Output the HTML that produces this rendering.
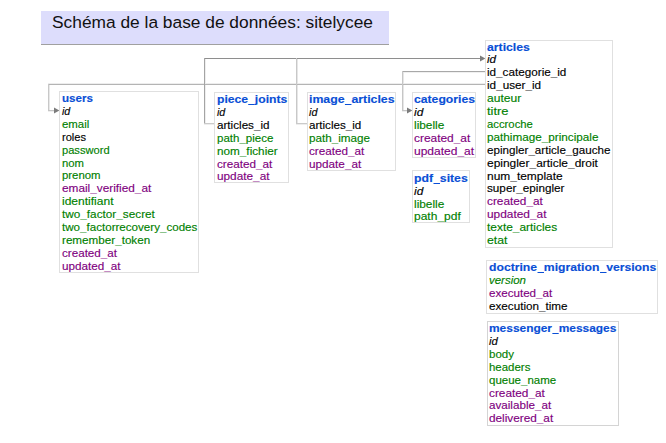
<!DOCTYPE html>
<html><head><meta charset="utf-8"><style>
html,body{margin:0;padding:0;background:#fff;width:666px;height:443px;overflow:hidden;position:relative}
body{font-family:"Liberation Sans",sans-serif}
.title{position:absolute;left:41px;top:11px;width:348px;height:33px;background:#ddddfc;border-bottom:1px solid #a0a0a0}
.title span{position:absolute;left:11px;top:2px;font-size:16.3px;line-height:19px;color:#111;white-space:nowrap;transform-origin:0 0;transform:scaleX(1.065)}
.tb{position:absolute;box-sizing:border-box;border:1px solid #e0e0e0;background:#fff}
.r{position:absolute;white-space:nowrap;font-size:11.8px;line-height:13px;height:13px;transform-origin:0 0;-webkit-text-stroke:0.15px currentColor}
.h{font-weight:bold;color:#0a4fd6;font-size:11.3px}
.i{font-style:italic}
.u{opacity:.6;-webkit-text-stroke:0}
.hu{position:relative;color:transparent;-webkit-text-stroke:0}
.hu::after{content:'';position:absolute;left:0.3px;right:-0.3px;bottom:-0.8px;height:1.5px;background:#0a4fd6}
.ln{position:absolute}
.ar{position:absolute}
</style></head><body>
<div class="title"><span>Schéma de la base de données: sitelycee</span></div>
<div class="ln" style="left:48px;top:83px;width:437px;height:1px;background:#ededed"></div>
<div class="ln" style="left:402px;top:72px;width:83px;height:1px;background:#f0f0f0"></div>
<div class="ln" style="left:205px;top:58px;width:1px;height:66px;background:#eeeeee"></div>
<div class="ln" style="left:204px;top:124px;width:10px;height:1px;background:#ededed"></div>
<div class="ln" style="left:297px;top:58px;width:1px;height:66px;background:#e6e6e6"></div>
<div class="ln" style="left:296px;top:124px;width:11px;height:1px;background:#ededed"></div>
<div class="ln" style="left:49px;top:84px;width:1px;height:27px;background:#e8e8e8"></div>
<div class="ln" style="left:48px;top:111px;width:7px;height:1px;background:#eeeeee"></div>
<div class="ln" style="left:403px;top:71px;width:1px;height:40px;background:#e6e6e6"></div>
<div class="ln" style="left:402px;top:111px;width:6px;height:1px;background:#eeeeee"></div>
<div class="ln" style="left:48px;top:84px;width:437px;height:1px;background:#b4b4b4"></div>
<div class="ln" style="left:402px;top:71px;width:83px;height:1px;background:#a8a8a8"></div>
<div class="ln" style="left:204px;top:58px;width:277px;height:1px;background:#8e8e8e"></div>
<div class="ln" style="left:204px;top:58px;width:1px;height:66px;background:#a4a4a4"></div>
<div class="ln" style="left:204px;top:123px;width:10px;height:1px;background:#cacaca"></div>
<div class="ln" style="left:296px;top:58px;width:1px;height:66px;background:#c8c8c8"></div>
<div class="ln" style="left:296px;top:123px;width:11px;height:1px;background:#cacaca"></div>
<div class="ln" style="left:48px;top:84px;width:1px;height:27px;background:#c8c8c8"></div>
<div class="ln" style="left:48px;top:110px;width:7px;height:1px;background:#c4c4c4"></div>
<div class="ln" style="left:402px;top:71px;width:1px;height:40px;background:#c6c6c6"></div>
<div class="ln" style="left:402px;top:110px;width:6px;height:1px;background:#c4c4c4"></div>
<svg class="ar" style="left:480px;top:55px" width="6" height="7"><polygon points="0,0.6 5.4,3.5 0,6.4" fill="#7c7c7c"/></svg>
<svg class="ar" style="left:54px;top:107px" width="6" height="7"><polygon points="0,0.6 5.4,3.5 0,6.4" fill="#7c7c7c"/></svg>
<svg class="ar" style="left:407px;top:107px" width="6" height="7"><polygon points="0,0.6 5.4,3.5 0,6.4" fill="#7c7c7c"/></svg>
<div class="tb" style="left:59px;top:91px;width:140px;height:182px"></div>
<div class="r h" style="left:62.10px;top:91.70px;transform:scaleX(1.0242)">users</div>
<div class="r i" style="left:62.10px;top:104.90px;transform:scaleX(0.9054);color:#000000">id</div>
<div class="r" style="left:62.10px;top:117.80px;transform:scaleX(0.9680);color:#008000">email</div>
<div class="r" style="left:62.10px;top:130.70px;transform:scaleX(0.9412);color:#000000">roles</div>
<div class="r" style="left:62.10px;top:143.60px;transform:scaleX(0.9425);color:#008000">password</div>
<div class="r" style="left:62.10px;top:156.50px;transform:scaleX(0.9586);color:#008000">nom</div>
<div class="r" style="left:62.10px;top:169.40px;transform:scaleX(0.9650);color:#008000">prenom</div>
<div class="r" style="left:62.10px;top:182.30px;transform:scaleX(1.0010);color:#800080">email<span class="u">_</span>verified<span class="u">_</span>at</div>
<div class="r" style="left:62.10px;top:195.20px;transform:scaleX(1.0197);color:#008000">identifiant</div>
<div class="r" style="left:62.10px;top:208.10px;transform:scaleX(0.9972);color:#008000">two<span class="u">_</span>factor<span class="u">_</span>secret</div>
<div class="r" style="left:62.10px;top:221.00px;transform:scaleX(0.9828);color:#008000">two<span class="u">_</span>factorrecovery<span class="u">_</span>codes</div>
<div class="r" style="left:62.10px;top:233.90px;transform:scaleX(0.9887);color:#008000">remember<span class="u">_</span>token</div>
<div class="r" style="left:62.10px;top:246.80px;transform:scaleX(0.9865);color:#800080">created<span class="u">_</span>at</div>
<div class="r" style="left:62.10px;top:259.70px;transform:scaleX(0.9922);color:#800080">updated<span class="u">_</span>at</div>
<div class="tb" style="left:214px;top:92px;width:75px;height:91px"></div>
<div class="r h" style="left:217.20px;top:92.70px;transform:scaleX(1.0763)">piece<span class="hu">_</span>joints</div>
<div class="r i" style="left:217.20px;top:105.90px;transform:scaleX(0.9054);color:#000000">id</div>
<div class="r" style="left:217.20px;top:118.80px;transform:scaleX(0.9887);color:#000000">articles<span class="u">_</span>id</div>
<div class="r" style="left:217.20px;top:131.70px;transform:scaleX(0.9764);color:#008000">path<span class="u">_</span>piece</div>
<div class="r" style="left:217.20px;top:144.60px;transform:scaleX(0.9950);color:#008000">nom<span class="u">_</span>fichier</div>
<div class="r" style="left:217.20px;top:157.50px;transform:scaleX(0.9918);color:#800080">created<span class="u">_</span>at</div>
<div class="r" style="left:217.20px;top:170.40px;transform:scaleX(0.9998);color:#800080">update<span class="u">_</span>at</div>
<div class="tb" style="left:307px;top:92px;width:89px;height:79px"></div>
<div class="r h" style="left:309.30px;top:92.70px;transform:scaleX(1.0887)">image<span class="hu">_</span>articles</div>
<div class="r i" style="left:309.30px;top:105.90px;transform:scaleX(0.9159);color:#000000">id</div>
<div class="r" style="left:309.30px;top:118.80px;transform:scaleX(0.9831);color:#000000">articles<span class="u">_</span>id</div>
<div class="r" style="left:309.30px;top:131.70px;transform:scaleX(0.9910);color:#008000">path<span class="u">_</span>image</div>
<div class="r" style="left:309.30px;top:144.60px;transform:scaleX(0.9918);color:#800080">created<span class="u">_</span>at</div>
<div class="r" style="left:309.30px;top:157.50px;transform:scaleX(0.9941);color:#800080">update<span class="u">_</span>at</div>
<div class="tb" style="left:412px;top:92px;width:64px;height:66px"></div>
<div class="r h" style="left:413.90px;top:92.70px;transform:scaleX(1.0786)">categories</div>
<div class="r i" style="left:413.90px;top:105.90px;transform:scaleX(1.0106);color:#000000">id</div>
<div class="r" style="left:413.90px;top:118.80px;transform:scaleX(1.0050);color:#008000">libelle</div>
<div class="r" style="left:413.90px;top:131.70px;transform:scaleX(1.0098);color:#800080">created<span class="u">_</span>at</div>
<div class="r" style="left:413.90px;top:144.60px;transform:scaleX(1.0176);color:#800080">updated<span class="u">_</span>at</div>
<div class="tb" style="left:412px;top:170px;width:58px;height:53px"></div>
<div class="r h" style="left:413.90px;top:171.70px;transform:scaleX(1.0825)">pdf<span class="hu">_</span>sites</div>
<div class="r i" style="left:413.90px;top:184.60px;transform:scaleX(1.0106);color:#000000">id</div>
<div class="r" style="left:413.90px;top:197.50px;transform:scaleX(1.0050);color:#008000">libelle</div>
<div class="r" style="left:413.90px;top:210.40px;transform:scaleX(1.0183);color:#008000">path<span class="u">_</span>pdf</div>
<div class="tb" style="left:485px;top:40px;width:128px;height:208px"></div>
<div class="r h" style="left:487.00px;top:40.70px;transform:scaleX(1.0832)">articles</div>
<div class="r i" style="left:487.00px;top:53.40px;transform:scaleX(0.9896);color:#000000">id</div>
<div class="r" style="left:487.00px;top:66.30px;transform:scaleX(0.9917);color:#000000">id<span class="u">_</span>categorie<span class="u">_</span>id</div>
<div class="r" style="left:487.00px;top:79.20px;transform:scaleX(0.9934);color:#000000">id<span class="u">_</span>user<span class="u">_</span>id</div>
<div class="r" style="left:487.00px;top:92.10px;transform:scaleX(1.0223);color:#008000">auteur</div>
<div class="r" style="left:487.00px;top:105.00px;transform:scaleX(1.0943);color:#008000">titre</div>
<div class="r" style="left:487.00px;top:117.90px;transform:scaleX(0.9581);color:#008000">accroche</div>
<div class="r" style="left:487.00px;top:130.80px;transform:scaleX(0.9941);color:#008000">pathimage<span class="u">_</span>principale</div>
<div class="r" style="left:487.00px;top:143.70px;transform:scaleX(0.9855);color:#000000">epingler<span class="u">_</span>article<span class="u">_</span>gauche</div>
<div class="r" style="left:487.00px;top:156.60px;transform:scaleX(1.0122);color:#000000">epingler<span class="u">_</span>article<span class="u">_</span>droit</div>
<div class="r" style="left:487.00px;top:169.50px;transform:scaleX(1.0127);color:#000000">num<span class="u">_</span>template</div>
<div class="r" style="left:487.00px;top:182.40px;transform:scaleX(0.9929);color:#000000">super<span class="u">_</span>epingler</div>
<div class="r" style="left:487.00px;top:195.30px;transform:scaleX(1.0008);color:#800080">created<span class="u">_</span>at</div>
<div class="r" style="left:487.00px;top:208.20px;transform:scaleX(1.0075);color:#800080">updated<span class="u">_</span>at</div>
<div class="r" style="left:487.00px;top:221.10px;transform:scaleX(1.0100);color:#008000">texte<span class="u">_</span>articles</div>
<div class="r" style="left:487.00px;top:234.00px;transform:scaleX(1.0403);color:#008000">etat</div>
<div class="tb" style="left:486px;top:260px;width:172px;height:54px"></div>
<div class="r h" style="left:488.90px;top:260.70px;transform:scaleX(1.0781)">doctrine<span class="hu">_</span>migration<span class="hu">_</span>versions</div>
<div class="r i" style="left:488.90px;top:273.90px;transform:scaleX(0.9723);color:#008000">version</div>
<div class="r" style="left:488.90px;top:286.80px;transform:scaleX(0.9827);color:#800080">executed<span class="u">_</span>at</div>
<div class="r" style="left:488.90px;top:299.70px;transform:scaleX(0.9905);color:#000000">execution<span class="u">_</span>time</div>
<div class="tb" style="left:487px;top:321px;width:132px;height:105px;border-color:#d4d4d4"></div>
<div class="r h" style="left:489.30px;top:321.70px;transform:scaleX(1.0561)">messenger<span class="hu">_</span>messages</div>
<div class="r i" style="left:489.30px;top:334.90px;transform:scaleX(0.9580);color:#000000">id</div>
<div class="r" style="left:489.30px;top:347.80px;transform:scaleX(0.9763);color:#008000">body</div>
<div class="r" style="left:489.30px;top:360.70px;transform:scaleX(0.9705);color:#008000">headers</div>
<div class="r" style="left:489.30px;top:373.60px;transform:scaleX(0.9752);color:#008000">queue<span class="u">_</span>name</div>
<div class="r" style="left:489.30px;top:386.50px;transform:scaleX(1.0026);color:#800080">created<span class="u">_</span>at</div>
<div class="r" style="left:489.30px;top:399.40px;transform:scaleX(0.9871);color:#800080">available<span class="u">_</span>at</div>
<div class="r" style="left:489.30px;top:412.30px;transform:scaleX(0.9983);color:#800080">delivered<span class="u">_</span>at</div>
</body></html>
